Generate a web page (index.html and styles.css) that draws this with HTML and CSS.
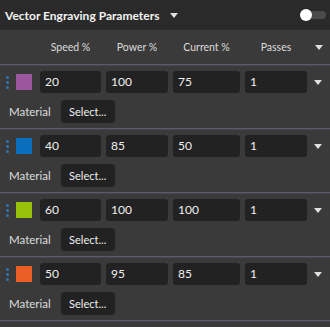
FILE: index.html
```html
<!DOCTYPE html>
<html lang="en">
<head>
    <meta charset="UTF-8">
    <title>Vector Engraving Parameters</title>
    <link rel="stylesheet" href="styles.css">
</head>
<body>
    <div id="panel">
        <div id="panel-head">
            <div id="panel-title">Vector Engraving Parameters</div>
            <div class="caret"></div>
            <div id="toggle"><div id="knob"></div></div>
        </div>
        <div id="col-heads">
            <div class="cells">
                <div>Speed %</div>
                <div>Power %</div>
                <div>Current %</div>
                <div>Passes</div>
            </div>
            <div class="caret"></div>
        </div>

        <div class="layer">
            <div class="values">
                <div class="handle"><i></i><i></i><i></i></div>
                <div class="swatch" style="background:#9a579e"></div>
                <div class="cells">
                    <div class="field">20</div>
                    <div class="field">100</div>
                    <div class="field">75</div>
                    <div class="field">1</div>
                </div>
                <div class="caret"></div>
            </div>
            <div class="material">
                <span>Material</span>
                <div class="select-btn">Select...</div>
            </div>
        </div>

        <div class="layer">
            <div class="values">
                <div class="handle"><i></i><i></i><i></i></div>
                <div class="swatch" style="background:#0a6ebf"></div>
                <div class="cells">
                    <div class="field">40</div>
                    <div class="field">85</div>
                    <div class="field">50</div>
                    <div class="field">1</div>
                </div>
                <div class="caret"></div>
            </div>
            <div class="material">
                <span>Material</span>
                <div class="select-btn">Select...</div>
            </div>
        </div>

        <div class="layer">
            <div class="values">
                <div class="handle"><i></i><i></i><i></i></div>
                <div class="swatch" style="background:#98c10c"></div>
                <div class="cells">
                    <div class="field">60</div>
                    <div class="field">100</div>
                    <div class="field">100</div>
                    <div class="field">1</div>
                </div>
                <div class="caret"></div>
            </div>
            <div class="material">
                <span>Material</span>
                <div class="select-btn">Select...</div>
            </div>
        </div>

        <div class="layer">
            <div class="values">
                <div class="handle"><i></i><i></i><i></i></div>
                <div class="swatch" style="background:#ea5f26"></div>
                <div class="cells">
                    <div class="field">50</div>
                    <div class="field">95</div>
                    <div class="field">85</div>
                    <div class="field">1</div>
                </div>
                <div class="caret"></div>
            </div>
            <div class="material">
                <span>Material</span>
                <div class="select-btn">Select...</div>
            </div>
        </div>
        <div class="layer last"></div>
    </div>
</body>
</html>
```

FILE: styles.css
```css
body, html {
    margin: 0;
    padding: 0;
    height: 100%;
    overflow: hidden;
    background-color: #3a3a3a;
    font-family: 'Lato', 'Liberation Sans', sans-serif;
    color: #e6e6e6;
}
#panel {
    width: 330px;
}
#panel-head {
    display: flex;
    align-items: center;
    height: 30px;
    padding: 0 4px 0 5px;
    background-color: #2a2a2a;
}
#panel-title {
    font-size: 12px;
    font-weight: 700;
    color: #f2f2f2;
}
#panel-head .caret {
    margin-left: 11px;
}
#toggle {
    margin-left: auto;
    position: relative;
    width: 24px;
    height: 8px;
    border-radius: 4px;
    background-color: #4a4a4a;
    margin-right: 0;
}
#knob {
    position: absolute;
    left: -2px;
    top: -2px;
    width: 12px;
    height: 12px;
    border-radius: 50%;
    background-color: #ffffff;
}
.caret {
    width: 0;
    height: 0;
    border-left: 4px solid transparent;
    border-right: 4px solid transparent;
    border-top: 5px solid #e0e0e0;
}
.cells {
    display: grid;
    grid-template-columns: 61px 62px 67px 62px;
    column-gap: 5px;
}
#col-heads {
    display: flex;
    align-items: center;
    height: 34px;
    padding-left: 40px;
    font-size: 10.5px;
    color: #dcdcdc;
}
#col-heads .cells div {
    text-align: center;
}
#col-heads .caret {
    margin-left: 8px;
}
.layer {
    border-top: 1px solid #5a5d68;
    box-shadow: inset 0 1px 0 #46474d;
    padding: 6px 0 5px;
}
.layer.last {
    padding: 0;
    height: 3px;
}
.values {
    display: flex;
    align-items: center;
    height: 22px;
}
.handle {
    display: flex;
    flex-direction: column;
    gap: 2px;
    width: 10px;
    padding-left: 6px;
}
.handle i {
    display: block;
    width: 3px;
    height: 3px;
    border-radius: 50%;
    background-color: #2f77b3;
}
.swatch {
    width: 16px;
    height: 16px;
    margin-right: 8px;
}
.field {
    height: 22px;
    line-height: 22px;
    padding-left: 5px;
    background-color: #222222;
    border-radius: 3px;
    font-size: 12px;
    color: #f0f0f0;
}
.values .caret {
    margin-left: 7px;
}
.material {
    display: flex;
    align-items: center;
    margin-top: 7px;
    padding-left: 9px;
    font-size: 11.5px;
    color: #dedede;
}
.select-btn {
    width: 54px;
    height: 23px;
    line-height: 23px;
    margin-left: 10px;
    text-align: center;
    background-color: #222222;
    border-radius: 3px;
    font-size: 11px;
    color: #f0f0f0;
}
```
